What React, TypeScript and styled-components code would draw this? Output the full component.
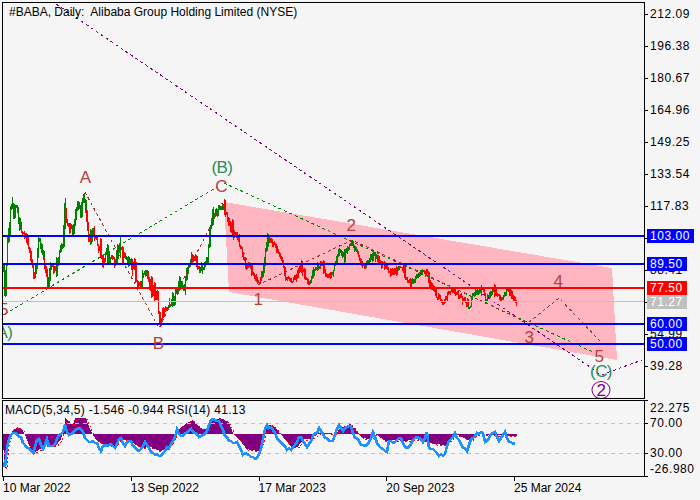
import React from "react";
import styled, { createGlobalStyle } from "styled-components";

type Pt = [number, number];

const GlobalStyle = createGlobalStyle`
  html, body { margin: 0; padding: 0; background: #f5f5f5; }
  body { font-family: "Liberation Sans", Arial, sans-serif; }
`;

const Page = styled.div`
  width: 700px;
  height: 500px;
  box-sizing: border-box;
  padding: 2px 0 0 2px;
  background: #f5f5f5;
  color: #000;
  font-size: 12px;
  line-height: 14px;
  display: flex;
  flex-direction: column;
  overflow: hidden;
`;
const Row = styled.div<{ $gap?: number }>`
  display: flex;
  margin-top: ${(p) => p.$gap ?? 0}px;
`;
const Panel = styled.div<{ $h: number }>`
  position: relative;
  box-sizing: border-box;
  width: 643px;
  height: ${(p) => p.$h}px;
  border: 1px solid #000;
  overflow: hidden;
  flex: none;
`;
const Plot = styled.svg`
  display: block;
  width: 641px;
  height: 100%;
`;
const Title = styled.div`
  position: absolute;
  left: 6px;
  top: 2px;
  white-space: pre;
`;
const SubTitle = styled.div`
  position: absolute;
  left: 2px;
  top: 2px;
  white-space: pre;
  letter-spacing: 0.28px;
`;
const Wave = styled.span<{ $x: number; $y: number; $c: string }>`
  position: absolute;
  left: ${(p) => p.$x - 3}px;
  top: ${(p) => p.$y - 3}px;
  transform: translate(-50%, -50%);
  color: ${(p) => p.$c};
  font-size: 17px;
  letter-spacing: -0.6px;
  line-height: 18px;
`;
const Circled = styled(Wave)`
  width: 19px;
  height: 18px;
  box-sizing: border-box;
  border: 1px solid #800080;
  border-radius: 50%;
  text-align: center;
  line-height: 17px;
`;
const Axis = styled.div`
  position: relative;
  flex: 1;
  display: flex;
  flex-direction: column;
`;
const PriceRows = styled.div`
  margin-top: -4px;
  display: flex;
  flex-direction: column;
`;
const AxisRow = styled.div<{ $h: number }>`
  height: ${(p) => p.$h}px;
  display: flex;
  align-items: center;
  gap: 2px;
`;
const Tick = styled.i<{ $at?: string }>`
  width: 3px;
  height: 1px;
  background: #000;
  flex: none;
  align-self: ${(p) => p.$at ?? "center"};
`;
const AxisText = styled.span`
  letter-spacing: 0.55px;
`;
const PriceBox = styled.span<{ $y: number; $bg: string; $w: number }>`
  position: absolute;
  left: 2px;
  top: ${(p) => p.$y - 7}px;
  width: ${(p) => p.$w}px;
  height: 14px;
  background: ${(p) => p.$bg};
  color: #fff;
  padding-left: 3px;
  box-sizing: border-box;
  letter-spacing: 0.55px;
  line-height: 15px;
`;
const DateAxis = styled.div`
  display: grid;
  grid-template-columns: repeat(5, 127.75px);
  padding-left: 1px;
`;
const DateCell = styled.div`
  display: flex;
  flex-direction: column;
  align-items: flex-start;
`;
const DateTick = styled.i`
  width: 1px;
  height: 4px;
  background: #000;
`;
const DateLabel = styled.span`
  white-space: nowrap;
`;

const price: Pt[] = [
  [3, 267], [4, 295], [5, 285], [7, 240], [11, 200], [13, 217], [16, 203], [18, 220], [22, 230], [27, 243], [30, 257],
  [33, 273], [36, 265], [38, 240], [42, 253], [45, 273], [47, 283], [50, 260], [53, 273], [57, 260], [62, 243],
  [64, 207], [67, 227], [72, 230], [77, 203], [80, 213], [83, 193], [86, 223], [89, 237], [93, 232], [97, 243],
  [102, 263], [106, 253], [112, 260], [115, 263], [119, 240], [123, 257], [128, 260], [133, 267], [138, 287],
  [145, 273], [150, 290], [157, 297], [159, 323], [163, 313], [168, 307], [173, 300], [178, 280], [183, 290],
  [187, 267], [192, 257], [197, 267], [203, 268], [207, 257], [209, 233], [213, 213], [218, 210], [223, 202],
  [227, 220], [232, 230], [237, 235], [241, 250], [245, 265], [250, 267], [255, 280], [260, 280], [263, 267],
  [267, 237], [272, 243], [277, 250], [282, 260], [285, 277], [290, 280], [295, 278], [300, 263], [305, 277],
  [308, 285], [313, 272], [320, 263], [325, 273], [332, 275], [335, 262], [338, 250], [342, 258], [347, 248],
  [350, 242], [357, 253], [363, 267], [373, 253], [380, 263], [393, 272], [400, 267], [410, 283], [420, 273],
  [427, 270], [428, 283], [435, 293], [443, 302], [450, 290], [460, 295], [465, 300], [469, 309], [472, 295],
  [482, 288], [485, 300], [493, 290], [500, 300], [507, 290], [516, 302],
];

const rsi: Pt[] = [
  [3, 463], [5, 468], [7, 448], [10, 435], [15, 433], [20, 437], [25, 445], [33, 453], [38, 437], [43, 448],
  [47, 440], [50, 448], [55, 445], [58, 435], [63, 432], [65, 423], [68, 437], [75, 430], [82, 428], [85, 438],
  [90, 442], [97, 443], [100, 452], [103, 445], [110, 445], [115, 447], [120, 437], [125, 445], [130, 440],
  [138, 452], [145, 442], [152, 452], [160, 457], [167, 448], [172, 445], [177, 430], [182, 437], [190, 428],
  [200, 437], [207, 432], [212, 417], [220, 422], [225, 435], [230, 442], [238, 443], [243, 455], [248, 453],
  [253, 458], [258, 457], [262, 445], [266, 425], [272, 428], [277, 438], [282, 442], [287, 450], [293, 448],
  [300, 435], [307, 447], [313, 437], [320, 428], [325, 438], [333, 442], [338, 425], [343, 430], [350, 425],
  [355, 437], [362, 445], [367, 445], [373, 433], [378, 445], [387, 452], [388, 442], [395, 443], [400, 438],
  [408, 450], [413, 440], [418, 435], [423, 443], [427, 431], [428, 447], [433, 448], [438, 455], [445, 455],
  [448, 443], [455, 433], [462, 445], [467, 452], [472, 437], [480, 433], [482, 428], [485, 442], [495, 431],
  [498, 442], [505, 433], [508, 442], [513, 443], [516, 445],
];

const macd: Pt[] = [
  [3, 450], [5, 468], [7, 445], [10, 434], [13, 430], [17, 427], [22, 430], [25, 436], [28, 444], [33, 453], [38, 450],
  [43, 447], [47, 444], [55, 446], [60, 440], [63, 430], [65, 418], [72, 425], [75, 418], [85, 418], [90, 430],
  [93, 436], [97, 441], [105, 445], [115, 446], [120, 438], [130, 441], [140, 448], [150, 447], [160, 451], [167, 448],
  [172, 441], [177, 430], [185, 424], [192, 420], [200, 428], [207, 430], [212, 420], [220, 418], [228, 422],
  [233, 434], [240, 441], [246, 449], [258, 451], [262, 441], [266, 425], [272, 425], [277, 430], [280, 434],
  [290, 446], [297, 447], [303, 439], [310, 439], [320, 432], [335, 434], [340, 428], [350, 424], [355, 430],
  [362, 438], [370, 439], [375, 434], [385, 441], [395, 440], [405, 441], [415, 439], [425, 441], [435, 444],
  [445, 445], [455, 434], [462, 437], [470, 441], [475, 434], [516, 436],
];

const at = (pts: Pt[], x: number) => {
  for (let i = 1; i < pts.length; i++) {
    if (x <= pts[i][0]) {
      const [x0, y0] = pts[i - 1];
      const [x1, y1] = pts[i];
      return y0 + ((y1 - y0) * (x - x0)) / (x1 - x0 || 1);
    }
  }
  return pts[pts.length - 1][1];
};

const makeRnd = (start: number) => {
  let seed = start;
  return () => {
    seed = (seed * 1664525 + 1013904223) >>> 0;
    return seed / 4294967296;
  };
};

const buildBars = () => {
  const rnd = makeRnd(20240325);
  let red = "";
  let green = "";
  let prev = at(price, 3);
  let run = rnd() > 0.5;
  for (let x = 3; x <= 516; x++) {
    const amp = x < 240 ? 9 : 5.5;
    const c = at(price, x);
    const close = c + (rnd() - 0.5) * amp;
    const spike = rnd() > 0.82 ? amp * 1.1 : amp * 0.3;
    const top = Math.min(prev, close) - rnd() * spike;
    const bottom = Math.max(prev, close) + rnd() * spike;
    const slope = at(price, x + 2) - at(price, x - 2);
    if (rnd() > 0.7) run = slope + (rnd() - 0.5) * 8 > 0;
    const seg = `M${x + 0.5} ${Math.round(top)}V${Math.round(bottom) + 1}`;
    const body = rnd() > 0.5 ? `M${x + 1.5} ${Math.round(top + 1)}V${Math.round(bottom)}` : "";
    if (run) red += seg + body;
    else green += seg + body;
    prev = close;
  }
  return { red, green };
};
const bars = buildBars();

const histogram = () => {
  let d = "";
  for (let x = 3; x <= 516; x++) {
    const v = Math.round(at(macd, x));
    d += `M${x + 0.5} 434V${v}`;
  }
  return d;
};

const jaggedRsi = () => {
  const rnd = makeRnd(77);
  let d = "";
  for (let x = 3; x <= 516; x += 2) {
    const y = Math.round(at(rsi, x) + (rnd() - 0.5) * 3);
    d += `${x === 3 ? "M" : "L"}${x} ${y}`;
  }
  return d;
};

const line = (pts: Pt[], dx = 0, dy = 0) =>
  pts.map(([x, y], i) => `${i ? "L" : "M"}${x + dx} ${y + dy}`).join("");

const Hline = styled.line<{ $c: string; $w: number }>`
  stroke: ${(p) => p.$c};
  stroke-width: ${(p) => p.$w};
  shape-rendering: crispEdges;
`;
const Dashed = styled.path<{ $c: string; $dash?: string }>`
  fill: none;
  stroke: ${(p) => p.$c};
  stroke-width: 1;
  stroke-dasharray: ${(p) => p.$dash ?? "3 3"};
  shape-rendering: crispEdges;
`;
const Crisp = styled.path<{ $c: string }>`
  fill: none;
  stroke: ${(p) => p.$c};
  stroke-width: 1;
  shape-rendering: crispEdges;
`;
const Channel = styled.polygon`
  fill: #ffb6c1;
  shape-rendering: crispEdges;
`;
const Rsi = styled.path`
  fill: none;
  stroke: #1e90ff;
  stroke-width: 2.6;
  shape-rendering: crispEdges;
`;

const levels: { y: number; c: string; w: number }[] = [
  { y: 236, c: "#0000ff", w: 2 },
  { y: 264, c: "#0000ff", w: 2 },
  { y: 288, c: "#ff0000", w: 2 },
  { y: 301.5, c: "#c0c0c0", w: 1 },
  { y: 324, c: "#0000ff", w: 2 },
  { y: 344, c: "#0000ff", w: 2 },
];

const BROWN = "#a52a2a";
const LABEL = "#b5423c";
const GREEN = "#008000";
const WAVE_GREEN = "#2e8b57";
const PURPLE = "#800080";

const waves: { t: string; x: number; y: number; c: string }[] = [
  { t: "A", x: 85, y: 178, c: LABEL },
  { t: "C", x: 221, y: 187, c: LABEL },
  { t: "(B)", x: 222, y: 168, c: WAVE_GREEN },
  { t: "B", x: 158, y: 344, c: LABEL },
  { t: "1", x: 258, y: 300, c: LABEL },
  { t: "2", x: 351, y: 226, c: LABEL },
  { t: "3", x: 529, y: 338, c: LABEL },
  { t: "4", x: 558, y: 282, c: LABEL },
  { t: "5", x: 599, y: 357, c: LABEL },
  { t: "(C)", x: 601, y: 372, c: WAVE_GREEN },
  { t: "5", x: 3.5, y: 310, c: LABEL },
  { t: "(A)", x: 2, y: 333, c: WAVE_GREEN },
];

const ticks: string[] = [
  "212.09", "196.38", "180.67", "164.96", "149.25", "133.54", "117.83", "", "88.41", "", "54.99", "39.28",
];
const boxes: { y: number; t: string; bg: string; w: number }[] = [
  { y: 234, t: "103.00", bg: "#0000ff", w: 47 },
  { y: 262, t: "89.50", bg: "#0000ff", w: 40 },
  { y: 286, t: "77.50", bg: "#ff0000", w: 40 },
  { y: 300, t: "71.27", bg: "#c0c0c0", w: 40 },
  { y: 322, t: "60.00", bg: "#0000ff", w: 40 },
  { y: 342, t: "50.00", bg: "#0000ff", w: 40 },
];
const dates = ["10 Mar 2022", "13 Sep 2022", "17 Mar 2023", "20 Sep 2023", "25 Mar 2024"];

export default function App() {
  return (
    <Page>
      <GlobalStyle />
      <Row>
        <Panel $h={397}>
          <Plot viewBox="3 3 641 395">
            <Channel points="224,202 612,268 617,360 229,292" />
            <Crisp $c={GREEN} d={bars.green} />
            <Crisp $c="#ff0000" d={bars.red} />
            <Dashed $c={PURPLE} d="M56 4L590 367L601 375L642 360" />
            <Dashed $c={GREEN} d="M5 314L217 187M224 183L595 353" />
            <Dashed $c={BROWN} d="M85 192L159 328L222 203L258 285L352 240L528 323L559 298L600 341" />
            {levels.map((l) => (
              <Hline key={l.y} $c={l.c} $w={l.w} x1={3} x2={644} y1={l.y} y2={l.y} />
            ))}
          </Plot>
          <Title>{"#BABA, Daily:  Alibaba Group Holding Limited (NYSE)"}</Title>
          {waves.map((w, i) => (
            <Wave key={i} $x={w.x} $y={w.y} $c={w.c}>
              {w.t}
            </Wave>
          ))}
          <Circled $x={601} $y={390} $c={PURPLE}>
            2
          </Circled>
        </Panel>
        <Axis>
          <PriceRows>
            {ticks.map((t, i) => (
              <AxisRow key={i} $h={32}>
                <Tick />
                <AxisText>{t}</AxisText>
              </AxisRow>
            ))}
          </PriceRows>
          {boxes.map((b) => (
            <PriceBox key={b.t} $y={b.y} $bg={b.bg} $w={b.w}>
              {b.t}
            </PriceBox>
          ))}
        </Axis>
      </Row>
      <Row $gap={1}>
        <Panel $h={77}>
          <Plot viewBox="3 401 641 75">
            <Crisp $c={PURPLE} d={histogram()} />
            <Dashed $c="#ff0000" $dash="2 2" d={line(macd, 2, 1)} />
            <Hline $c="#c0c0c0" $w={1} x1={3} x2={644} y1={423.5} y2={423.5} strokeDasharray="4 4" />
            <Hline $c="#c0c0c0" $w={1} x1={3} x2={644} y1={453.5} y2={453.5} strokeDasharray="4 4" />
            <Rsi d={jaggedRsi()} />
          </Plot>
          <SubTitle>MACD(5,34,5) -1.546 -0.944 RSI(14) 41.13</SubTitle>
        </Panel>
        <Axis>
          <AxisRow $h={15}>
            <Tick $at="flex-start" />
            <AxisText>22.275</AxisText>
          </AxisRow>
          <AxisRow $h={16}>
            <Tick />
            <AxisText>70.00</AxisText>
          </AxisRow>
          <AxisRow $h={14} />
          <AxisRow $h={16}>
            <Tick />
            <AxisText>30.00</AxisText>
          </AxisRow>
          <AxisRow $h={16}>
            <Tick $at="flex-end" />
            <AxisText>-26.980</AxisText>
          </AxisRow>
        </Axis>
      </Row>
      <DateAxis>
        {dates.map((t) => (
          <DateCell key={t}>
            <DateTick />
            <DateLabel>{t}</DateLabel>
          </DateCell>
        ))}
      </DateAxis>
    </Page>
  );
}
